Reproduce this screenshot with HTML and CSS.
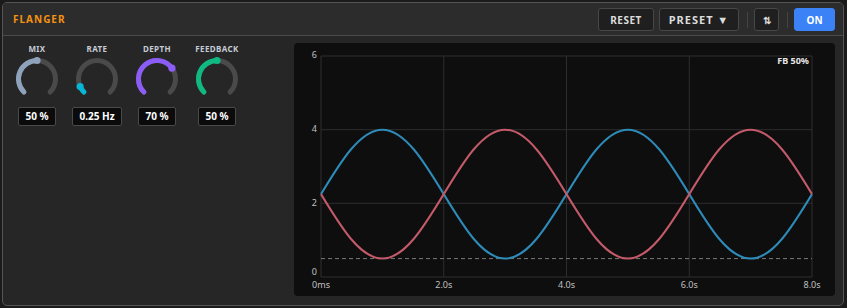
FILE: index.html
```html
<!DOCTYPE html>
<html lang="en">
<head>
    <meta charset="UTF-8">
    <meta name="viewport" content="width=device-width, initial-scale=1.0">
    <title>Flanger</title>
    <link rel="stylesheet" href="styles.css">
</head>
<body>
    <div class="panel">
        <div class="header">
            <div class="title">FLANGER</div>
            <div class="actions">
                <button class="btn reset">RESET</button>
                <button class="btn preset">PRESET ▼</button>
                <span class="sep"></span>
                <button class="btn swap">⇅</button>
                <span class="sep"></span>
                <button class="btn on">ON</button>
            </div>
        </div>
        <div class="body">
            <div class="knobs">
                <div class="knob">
                    <div class="label">MIX</div>
                    <svg width="48" height="48" viewBox="0 0 48 48">
                        <path class="track" d="M10.92 37.08 A18.5 18.5 0 1 1 37.08 37.08"/>
                        <path class="value" stroke="#8fa2bc" d="M10.92 37.08 A18.5 18.5 0 0 1 24 5.5"/>
                        <circle cx="24" cy="5.5" r="3.6" fill="#8fa2bc"/>
                    </svg>
                    <div class="readout">50 %</div>
                </div>
                <div class="knob">
                    <div class="label">RATE</div>
                    <svg width="48" height="48" viewBox="0 0 48 48">
                        <path class="track" d="M10.92 37.08 A18.5 18.5 0 1 1 37.08 37.08"/>
                        <path class="value" stroke="#06b6d4" d="M10.92 37.08 A18.5 18.5 0 0 1 7.1 31.52"/>
                        <circle cx="7.1" cy="31.52" r="3.6" fill="#06b6d4"/>
                    </svg>
                    <div class="readout">0.25 Hz</div>
                </div>
                <div class="knob">
                    <div class="label">DEPTH</div>
                    <svg width="48" height="48" viewBox="0 0 48 48">
                        <path class="track" d="M10.92 37.08 A18.5 18.5 0 1 1 37.08 37.08"/>
                        <path class="value" stroke="#8b5cf6" d="M10.92 37.08 A18.5 18.5 0 1 1 38.97 13.13"/>
                        <circle cx="38.97" cy="13.13" r="3.6" fill="#8b5cf6"/>
                    </svg>
                    <div class="readout">70 %</div>
                </div>
                <div class="knob">
                    <div class="label">FEEDBACK</div>
                    <svg width="48" height="48" viewBox="0 0 48 48">
                        <path class="track" d="M10.92 37.08 A18.5 18.5 0 1 1 37.08 37.08"/>
                        <path class="value" stroke="#10b981" d="M10.92 37.08 A18.5 18.5 0 0 1 24 5.5"/>
                        <circle cx="24" cy="5.5" r="3.6" fill="#10b981"/>
                    </svg>
                    <div class="readout">50 %</div>
                </div>
            </div>
            <div class="chart">
                <svg width="541" height="253" viewBox="0 0 541 253">
                    <g class="grid">
                        <line x1="27" y1="13" x2="518" y2="13"/>
                        <line x1="27" y1="86.7" x2="518" y2="86.7"/>
                        <line x1="27" y1="160.3" x2="518" y2="160.3"/>
                        <line x1="27" y1="234" x2="518" y2="234"/>
                        <line x1="27" y1="13" x2="27" y2="234"/>
                        <line x1="149.75" y1="13" x2="149.75" y2="234"/>
                        <line x1="272.5" y1="13" x2="272.5" y2="234"/>
                        <line x1="395.25" y1="13" x2="395.25" y2="234"/>
                        <line x1="518" y1="13" x2="518" y2="234"/>
                    </g>
                    <line class="floor" x1="27" y1="215.6" x2="518" y2="215.6"/>
                    <path class="wave blue" d="M27 151.125
                        c20.015,-33.02 39.163,-64.458 61.375,-64.458
                        c22.212,0 41.36,31.438 61.375,64.458
                        c20.015,33.02 39.163,64.458 61.375,64.458
                        c22.212,0 41.36,-31.438 61.375,-64.458
                        c20.015,-33.02 39.163,-64.458 61.375,-64.458
                        c22.212,0 41.36,31.438 61.375,64.458
                        c20.015,33.02 39.163,64.458 61.375,64.458
                        c22.212,0 41.36,-31.438 61.375,-64.458"/>
                    <path class="wave red" d="M27 151.125
                        c20.015,33.02 39.163,64.458 61.375,64.458
                        c22.212,0 41.36,-31.438 61.375,-64.458
                        c20.015,-33.02 39.163,-64.458 61.375,-64.458
                        c22.212,0 41.36,31.438 61.375,64.458
                        c20.015,33.02 39.163,64.458 61.375,64.458
                        c22.212,0 41.36,-31.438 61.375,-64.458
                        c20.015,-33.02 39.163,-64.458 61.375,-64.458
                        c22.212,0 41.36,31.438 61.375,64.458"/>
                    <g class="ylabels">
                        <text x="23" y="13">6</text>
                        <text x="23" y="86.7">4</text>
                        <text x="23" y="160.3">2</text>
                        <text x="23" y="230">0</text>
                    </g>
                    <g class="xlabels">
                        <text x="27" y="243">0ms</text>
                        <text x="149.75" y="243">2.0s</text>
                        <text x="272.5" y="243">4.0s</text>
                        <text x="395.25" y="243">6.0s</text>
                        <text x="518" y="243">8.0s</text>
                    </g>
                    <text class="fb" x="515" y="19">FB 50%</text>
                </svg>
            </div>
        </div>
    </div>
</body>
</html>
```

FILE: styles.css
```css
body {
    margin: 0;
    background: #1b1b1b;
    font-family: "Noto Sans", "Liberation Sans", sans-serif;
}
.panel {
    margin: 2px 3px 2px 2px;
    width: 842px;
    height: 304px;
    box-sizing: border-box;
    border: 1px solid #555;
    border-radius: 5px;
    background: #262626;
    display: flex;
    flex-direction: column;
    overflow: hidden;
}
.header {
    height: 33px;
    box-sizing: border-box;
    border-bottom: 1px solid #4a4a4a;
    background: #2c2c2c;
    display: flex;
    align-items: flex-start;
    justify-content: space-between;
    padding: 5px 8px 0 10px;
}
.title {
    color: #f39212;
    font-size: 10px;
    font-weight: 700;
    letter-spacing: 1px;
    line-height: 23px;
}
.actions {
    display: flex;
    align-items: center;
}
.btn {
    height: 23px;
    box-sizing: border-box;
    border: 1px solid #474747;
    border-radius: 3px;
    background: #1f1f1f;
    color: #dcdcdc;
    font-family: inherit;
    font-weight: 700;
    font-size: 10px;
    padding: 0;
    cursor: pointer;
}
.reset { width: 56px; margin-right: 5px; letter-spacing: 0.5px; }
.preset { width: 80px; font-size: 11px; letter-spacing: 1px; }
.swap { width: 25px; font-size: 10px; }
.on { width: 41px; background: #3b82f6; border-color: #3b82f6; color: #fff; }
.sep {
    width: 1px;
    height: 16px;
    background: #444;
    margin: 0 6px 0 8px;
}
.body {
    flex: 1;
    display: flex;
    padding: 7px 8px 9px 4px;
}
.knobs {
    flex: 1;
    display: flex;
    align-items: flex-start;
}
.knob {
    width: 60px;
    display: flex;
    flex-direction: column;
    align-items: center;
}
.label {
    color: #c5ccd6;
    font-size: 8px;
    font-weight: 700;
    letter-spacing: 0.4px;
    line-height: 12px;
}
.knob svg { margin-bottom: 4px; }
.track, .value {
    fill: none;
    stroke-width: 5;
    stroke-linecap: round;
}
.track { stroke: #4a4a4a; }
.readout {
    height: 19px;
    box-sizing: border-box;
    border: 1px solid #4a4a4a;
    border-radius: 2px;
    background: #0b0b0b;
    color: #fff;
    font-size: 10px;
    font-weight: 700;
    line-height: 17px;
    padding: 0 6px;
}
.chart {
    width: 541px;
    height: 253px;
    background: #0e0e0e;
    border-radius: 4px;
}
.chart svg { display: block; }
.grid line { stroke: #2e2e2e; stroke-width: 1; }
.floor { stroke: #7a7a7a; stroke-width: 1; stroke-dasharray: 4 3; }
.wave { fill: none; stroke-width: 2; }
.blue { stroke: #2e8bb8; }
.red { stroke: #c25a6a; }
.ylabels text {
    fill: #c0c0c0;
    font-size: 9px;
    text-anchor: end;
    dominant-baseline: middle;
}
.xlabels text {
    fill: #c0c0c0;
    font-size: 9px;
    text-anchor: middle;
    dominant-baseline: middle;
}
.fb {
    fill: #e6e6e6;
    font-size: 9px;
    font-weight: 700;
    text-anchor: end;
    dominant-baseline: middle;
}
```
